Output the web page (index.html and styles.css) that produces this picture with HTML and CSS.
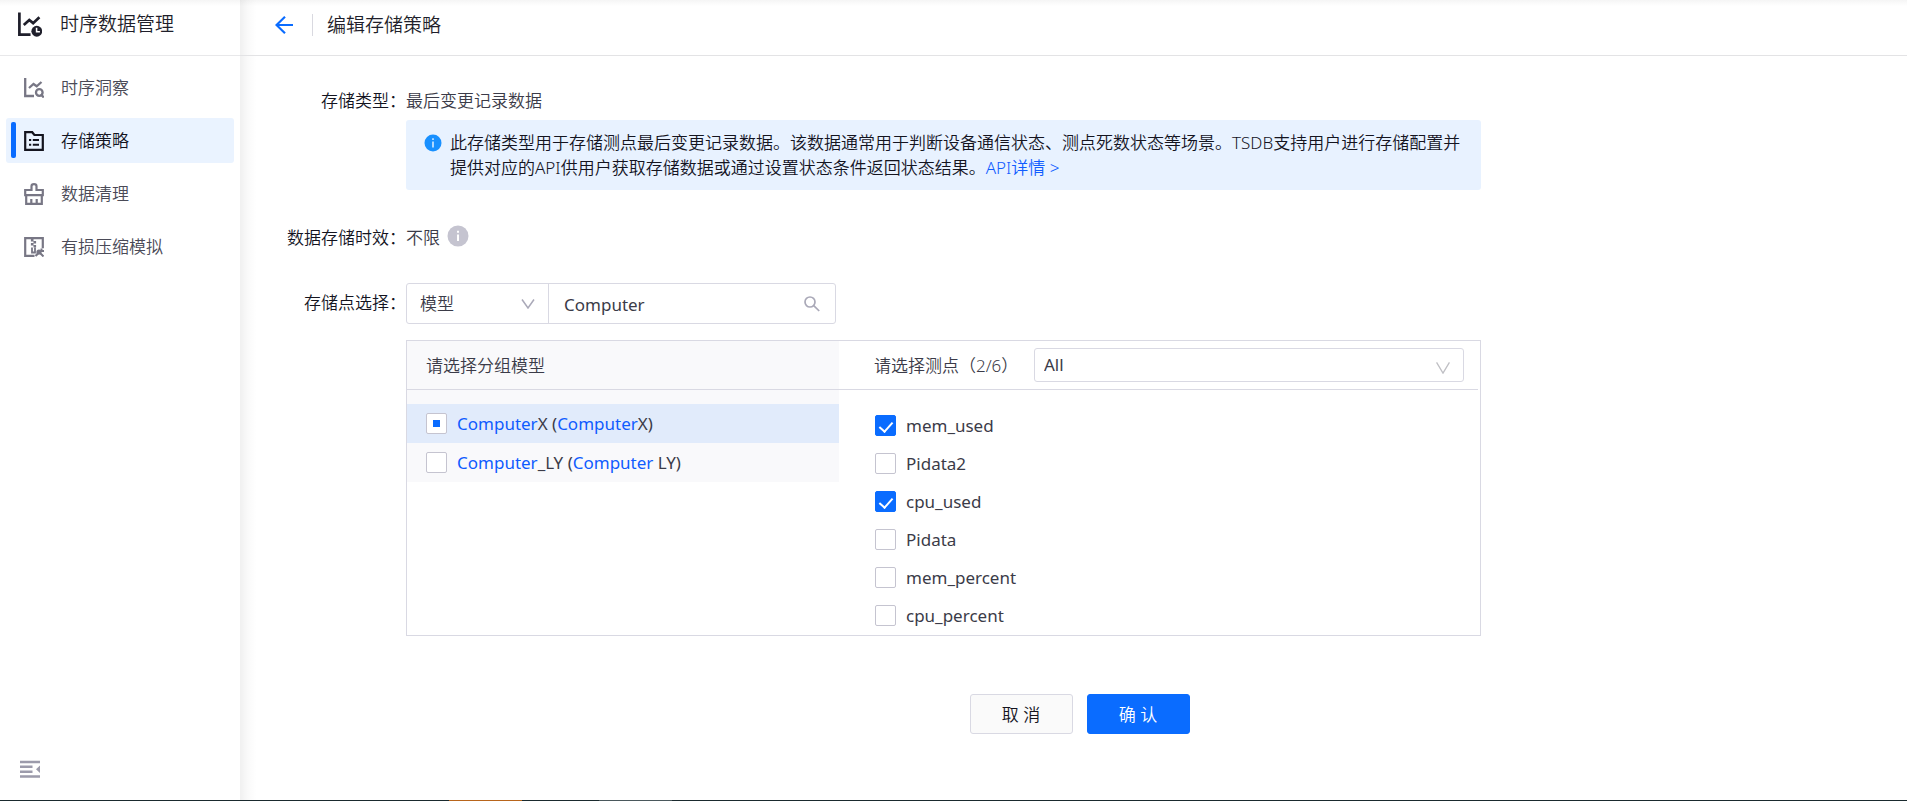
FILE: index.html
```html
<!DOCTYPE html>
<html lang="zh-CN">
<head>
<meta charset="utf-8">
<title>编辑存储策略</title>
<link rel="stylesheet" href="styles.css">
</head>
<body>
<div class="app">
  <aside class="sidebar">
    <div class="brand">
      <svg class="brand-icon" viewBox="0 0 24 24" fill="none" stroke="currentColor" stroke-width="2.6">
        <path d="M2.300 .5v21.200H13"/><path d="M6.500 12.500l5.300-4.800 3.700 3 6-5.700"/>
        <circle cx="19" cy="18.500" r="5.200" fill="currentColor" stroke="none"/>
        <path d="M18.800 15.200v3.800h3.200" stroke="#fff" stroke-width="1.500"/>
      </svg>
      <span>时序数据管理</span>
    </div>
    <nav class="menu">
      <a class="menu-item" href="#">
        <svg class="menu-icon" viewBox="0 0 20 20" fill="none" stroke="currentColor" stroke-width="2.300">
          <path d="M1.200 0v18h8.800"/><path d="M5 10l4.500-4 3.200 2.300 4.800-4.300"/>
          <circle cx="15.300" cy="14.500" r="3.300"/><path d="M17 16.500l2.800 3"/>
        </svg>
        <span>时序洞察</span>
      </a>
      <a class="menu-item active" href="#" aria-current="page">
        <svg class="menu-icon" viewBox="0 0 20 20" fill="none" stroke="currentColor" stroke-width="2.200">
          <path d="M1.200 1.200h7l2.200 2.800h8.400v14.800H1.200z"/>
          <path d="M5 9h2.200M8.800 9h6.200M5 13.800h2.200M8.800 13.800h6.200" stroke-width="2"/>
        </svg>
        <span>存储策略</span>
      </a>
      <a class="menu-item" href="#">
        <svg class="menu-icon tall" viewBox="0 0 20 22" fill="none" stroke="currentColor" stroke-width="2.200">
          <path d="M7.500 7V3.200Q7.500 1.200 10 1.200t2.500 2V7h6.300v5.200H1.200V7z"/>
          <path d="M2.200 12v8.800h15.600V12M7.300 16v5M12.700 16v5"/>
        </svg>
        <span>数据清理</span>
      </a>
      <a class="menu-item" href="#">
        <svg class="menu-icon" viewBox="0 0 20 20" fill="none" stroke="currentColor" stroke-width="2.200">
          <path d="M10.500 18.800H1.200V1.200h17.600v10"/>
          <path d="M8.200 2v2.500M10.800 4v2.500M8.200 6v2.500M10.800 8v2.500" stroke-width="2.600"/><path d="M8 10.500v5h3v-5" stroke-width="1.800"/>
          <path d="M11.500 19l4-4"/><circle cx="15" cy="15" r="2.600" fill="currentColor" stroke="none"/><path d="M16 16l3.500 3.500M17.500 11.500v2.500h2.500" stroke-width="2"/>
        </svg>
        <span>有损压缩模拟</span>
      </a>
    </nav>
    <button class="collapse" type="button" aria-label="收起菜单">
      <svg viewBox="0 0 20 18" width="20" height="18" fill="currentColor">
        <path d="M0 .8h20v2.400H0zM0 5.600h12.500V8H0zM0 10.500h12.500v2.400H0zM0 15.300h20v2.400H0zM20 5.500v7.500l-4-3.750z"/>
      </svg>
    </button>
  </aside>

  <main class="main">
    <header class="page-header">
      <a class="back" href="#" aria-label="返回">
        <svg viewBox="0 0 18 18" width="18" height="18" fill="none" stroke="currentColor" stroke-width="2.200">
          <path d="M18 9H1.500M10 .8L1.500 9l8.500 8.200"/>
        </svg>
      </a>
      <h1 class="page-title">编辑存储策略</h1>
    </header>

    <form class="form">
      <div class="form-row type-row">
        <span class="label">存储类型：</span>
        <div class="field">
          <div class="value">最后变更记录数据</div>
          <div class="notice">
            <svg class="notice-icon" viewBox="0 0 18 18" width="18" height="18">
              <circle cx="9" cy="9" r="8.500" fill="#1890ff"/>
              <path d="M9 7.500v6M9 4.300v1.600" stroke="#fff" stroke-width="1.300"/>
            </svg>
            <p class="notice-text">此存储类型用于存储测点最后变更记录数据。该数据通常用于判断设备通信状态、测点死数状态等场景。TSDB支持用户进行存储配置并提供对应的API供用户获取存储数据或通过设置状态条件返回状态结果。<a href="#">API详情 &gt;</a></p>
          </div>
        </div>
      </div>

      <div class="form-row ttl-row">
        <span class="label">数据存储时效：</span>
        <div class="field value with-icon">
          <span>不限</span>
          <svg viewBox="0 0 22 22" width="22" height="22">
            <circle cx="11" cy="11" r="10.500" fill="#c5c4d0"/>
            <path d="M11 9.500v6.500M11 5.700v2" stroke="#fff" stroke-width="2"/>
          </svg>
        </div>
      </div>

      <div class="form-row point-row">
        <label class="label point-label" for="mode">存储点选择：</label>
        <div class="field">
          <div class="search-group">
            <div class="select-wrap mode">
              <select id="mode"><option>模型</option></select>
              <svg class="chevron" viewBox="0 0 14 10" width="14" height="10" fill="none" stroke="#aaa9b8" stroke-width="1.500"><path d="M1 .5l6 8.500 6-8.500"/></svg>
            </div>
            <div class="search-box">
              <input type="text" value="Computer" aria-label="搜索模型">
              <svg viewBox="0 0 16 16" width="16" height="16" fill="none" stroke="#aaa9b8" stroke-width="1.700"><circle cx="6" cy="6" r="5"/><path d="M9.700 9.700l5.500 5.300"/></svg>
            </div>
          </div>

          <div class="picker">
            <section class="groups">
              <div class="picker-head">请选择分组模型</div>
              <div class="group-list">
                <label class="group selected"><input class="check partial" type="checkbox"><span><em>Computer</em>X (<em>Computer</em>X)</span></label>
                <label class="group"><input class="check" type="checkbox"><span><em>Computer</em>_LY (<em>Computer</em> LY)</span></label>
              </div>
            </section>
            <section class="points">
              <div class="picker-head">
                <label for="filter">请选择测点（2/6）</label>
                <div class="select-wrap filter">
                  <select id="filter"><option>All</option></select>
                  <svg class="chevron" viewBox="0 0 16 14" width="16" height="12" fill="none" stroke="#bfbfc4" stroke-width="1.500"><path d="M.5 .5L8 13 15.500 .5"/></svg>
                </div>
              </div>
              <div class="point-list">
                <label class="point"><input class="check" type="checkbox" checked><span>mem_used</span></label>
                <label class="point"><input class="check" type="checkbox"><span>Pidata2</span></label>
                <label class="point"><input class="check" type="checkbox" checked><span>cpu_used</span></label>
                <label class="point"><input class="check" type="checkbox"><span>Pidata</span></label>
                <label class="point"><input class="check" type="checkbox"><span>mem_percent</span></label>
                <label class="point"><input class="check" type="checkbox"><span>cpu_percent</span></label>
              </div>
            </section>
          </div>
        </div>
      </div>

      <div class="actions">
        <button class="btn" type="button">取 消</button>
        <button class="btn primary" type="submit">确 认</button>
      </div>
    </form>
  </main>
</div>
<div class="edge"></div>
</body>
</html>
```
FILE: styles.css
```css
* { box-sizing: border-box; }

body {
  margin: 0;
  min-height: 100vh;
  display: flex;
  flex-direction: column;
  font: 350 17px/25px "Noto Sans", "Noto Sans CJK SC", sans-serif;
  color: #3b3b48;
  background: #fff;
}

a { color: #0f5cff; text-decoration: none; }
em { font-style: normal; color: #0f5cff; }
button, input, select { font: inherit; color: inherit; }

.app {
  flex: 1;
  display: flex;
  background: linear-gradient(#f5f5f5, #fff 6px);
}

.sidebar {
  width: 240px;
  flex: none;
  display: flex;
  flex-direction: column;
}

.brand {
  height: 56px;
  padding: 0 0 6px 17px;
  display: flex;
  align-items: center;
  gap: 18px;
  border-bottom: 1px solid #e8e8ea;
  font-size: 19px;
  color: #1f1f2b;
}
.brand-icon { width: 25px; height: 25px; }

.menu {
  flex: 1;
  display: flex;
  flex-direction: column;
  gap: 8px;
  padding: 9px 6px;
}
.menu-item {
  position: relative;
  height: 45px;
  padding-left: 18px;
  display: flex;
  align-items: center;
  gap: 17px;
  border-radius: 3px;
  color: #4a4a57;
}
.menu-icon { width: 20px; height: 20px; color: #787785; }
.menu-icon.tall { height: 22px; }
.menu-item.active { background: #eaf3ff; color: #14141f; }
.menu-item.active .menu-icon { color: #14141f; }
.menu-item.active::before {
  content: "";
  position: absolute;
  left: 5px;
  top: 4px;
  bottom: 5px;
  width: 5px;
  border-radius: 2px;
  background: #0a6cff;
}

.collapse {
  align-self: flex-start;
  display: flex;
  margin: 0 0 22px 20px;
  padding: 0;
  border: 0;
  background: none;
  color: #9c9bab;
}

.main {
  flex: 1;
  min-width: 0;
  background: linear-gradient(90deg, #0000000f, #00000005 8px, transparent 17px);
}

.page-header {
  height: 56px;
  padding: 0 0 6px 35px;
  display: flex;
  align-items: center;
  gap: 19px;
  border-bottom: 1px solid #e3e3e5;
}
.back { display: flex; color: #0a6cff; }
.page-title {
  margin: 0;
  padding-left: 14px;
  border-left: 1px solid #d9d9e0;
  font-size: 19px;
  line-height: 22px;
  font-weight: inherit;
  color: #1f1f2b;
}

.form { padding-top: 32px; }
.form-row { display: flex; }
.label {
  width: 166px;
  flex: none;
  text-align: right;
  color: #14141f;
}
.field { width: 64.5%; }

.notice {
  display: flex;
  gap: 8px;
  margin-top: 7px;
  padding: 10px 18px;
  min-height: 70px;
  border-radius: 3px;
  background: #e8f2ff;
  color: #14141f;
}
.notice-icon { flex: none; margin-top: 4px; }
.notice-text { margin: 0; }

.ttl-row { margin-top: 35px; }
.with-icon { display: flex; gap: 7px; }

.point-row { margin-top: 33px; }
.point-label { line-height: 40px; }

.search-group {
  width: 40%;
  height: 41px;
  display: flex;
  border: 1px solid #d9d9e3;
  border-radius: 3px;
}
.select-wrap { position: relative; }
.select-wrap select {
  width: 100%;
  height: 100%;
  border: 0;
  outline: 0;
  appearance: none;
  background: none;
}
.chevron { position: absolute; pointer-events: none; }
.mode { width: 142px; flex: none; border-right: 1px solid #d9d9e3; }
.mode select { padding: 0 13px; }
.mode .chevron { right: 13px; top: 15px; }
.search-box {
  flex: 1;
  min-width: 0;
  display: flex;
  align-items: center;
  padding: 0 15px;
}
.search-box input {
  flex: 1;
  min-width: 0;
  padding: 2px 0 0;
  border: 0;
  outline: 0;
  background: none;
  font-weight: 400;
}

.picker {
  display: flex;
  margin-top: 16px;
  border: 1px solid #d9d9e3;
}
.groups { width: 432px; flex: none; }
.points { flex: 1; min-width: 0; margin-right: 2px; }
.picker-head {
  height: 49px;
  display: flex;
  align-items: center;
  border-bottom: 1px solid #d9d9e3;
}
.groups .picker-head { padding-left: 19px; background: #f9f9fb; }
.points .picker-head { padding: 0 14px 0 35px; }
.points .picker-head label { width: 160px; flex: none; }
.filter {
  flex: 1;
  height: 34px;
  border: 1px solid #d9d9e3;
  border-radius: 3px;
  font-weight: 400;
}
.filter select { padding: 0 9px 2px; }
.filter .chevron { right: 12px; top: 13px; }

.group-list { padding-top: 14px; background: #f9f9fb; }
.group, .point { display: flex; align-items: center; gap: 10px; font-weight: 400; }
.group { height: 39px; padding-left: 19px; }
.group.selected { background: #e1ebfb; }
.point-list { padding: 16px 0 1px 36px; }
.point { height: 38px; }

.check {
  position: relative;
  width: 21px;
  height: 21px;
  margin: 0;
  flex: none;
  appearance: none;
  border: 1px solid #c5c4d0;
  border-radius: 2px;
  background: #fff;
}
.check:checked { border-color: #0a6cff; background: #0a6cff; }
.check:checked::after {
  content: "";
  position: absolute;
  left: 6px;
  top: 3px;
  width: 6px;
  height: 11px;
  border: solid #fff;
  border-width: 0 2px 2px 0;
  transform: rotate(42deg);
}
.check.partial::after {
  content: "";
  position: absolute;
  inset: 6px;
  background: #0a6cff;
}

.actions {
  display: flex;
  gap: 14px;
  margin-top: 58px;
  padding-left: calc(50% - 104px);
}
.btn {
  width: 103px;
  height: 40px;
  padding: 0;
  border: 1px solid #d9d9e3;
  border-radius: 3px;
  background: #fafafa;
  color: #14141f;
}
.btn.primary { border-color: #0a6cff; background: #0a6cff; color: #fff; }

.edge {
  height: 1px;
  background: linear-gradient(90deg, #1a2a2e 449px, #b8651b 449px 522px, #1a2a2e 522px 599px, #4a585c 599px 672px, #1a2a2e 672px);
}
```
